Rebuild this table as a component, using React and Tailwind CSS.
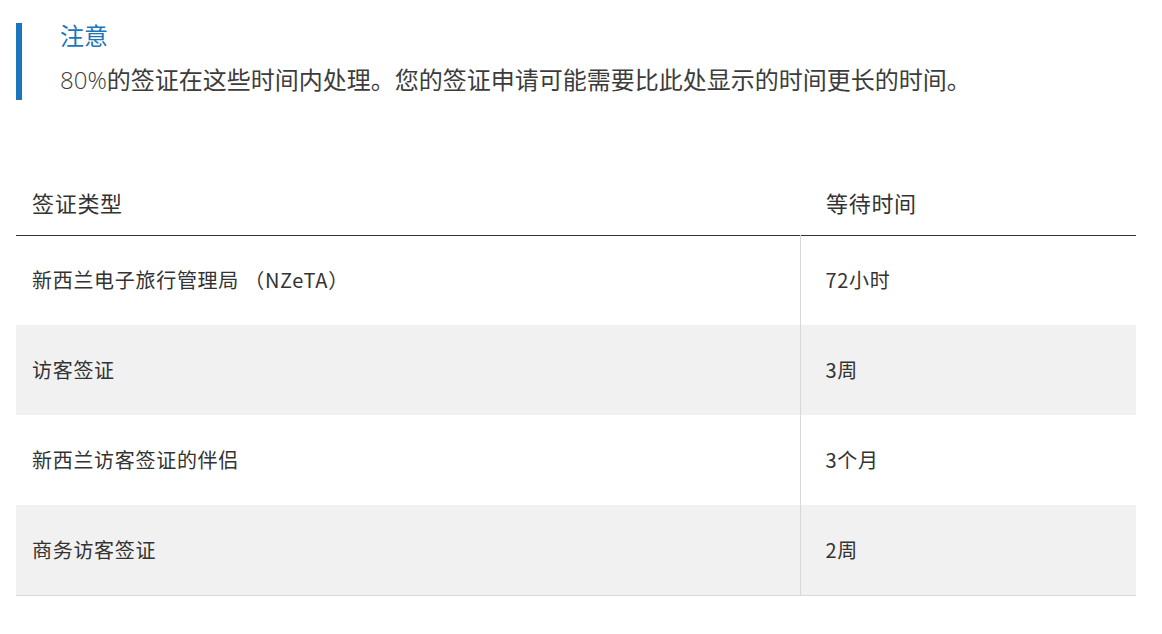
const rows = [
  { type: '新西兰电子旅行管理局 （NZeTA）', wait: '72小时' },
  { type: '访客签证', wait: '3周' },
  { type: '新西兰访客签证的伴侣', wait: '3个月' },
  { type: '商务访客签证', wait: '2周' },
];

export default function App() {
  return (
    <div className="min-h-screen bg-white px-4 pt-[23px] font-['Noto_Sans_CJK_SC',sans-serif] text-[#333]">
      {/* 注意 */}
      <div className="flex h-[77px] border-l-[6px] border-[#1a75bb] pl-[38px]">
        <div>
          <div className="text-[24px] leading-[24px] text-[#1a75bb]">注意</div>
          <p className="mt-[18px] text-[24px] leading-[28px] text-[#3c3c3c]">
            <span className="font-['Open_Sans'] font-light">80%</span>
            的签证在这些时间内处理。您的签证申请可能需要比此处显示的时间更长的时间。
          </p>
        </div>
      </div>

      {/* 表格 */}
      <table className="mt-[70px] w-[1120px] border-collapse tracking-[0.7px]">
        <thead>
          <tr className="border-b border-[#333]">
            <th className="h-[65px] w-[784px] pl-4 text-left text-[22px] font-normal">签证类型</th>
            <th className="pl-[26px] text-left text-[22px] font-normal">等待时间</th>
          </tr>
        </thead>
        <tbody>
          {rows.map((r, i) => (
            <tr key={r.type} className={i % 2 === 1 ? 'bg-[#f1f1f2]' : 'bg-white'}>
              <td className="h-[90px] border-r border-[#d8d8d8] pl-4 text-[20px]">{r.type}</td>
              <td className="pl-[25px] text-[20px]">{r.wait}</td>
            </tr>
          ))}
        </tbody>
      </table>
      <div className="h-px w-[1120px] bg-[#d8d8d8]" />
    </div>
  );
}
